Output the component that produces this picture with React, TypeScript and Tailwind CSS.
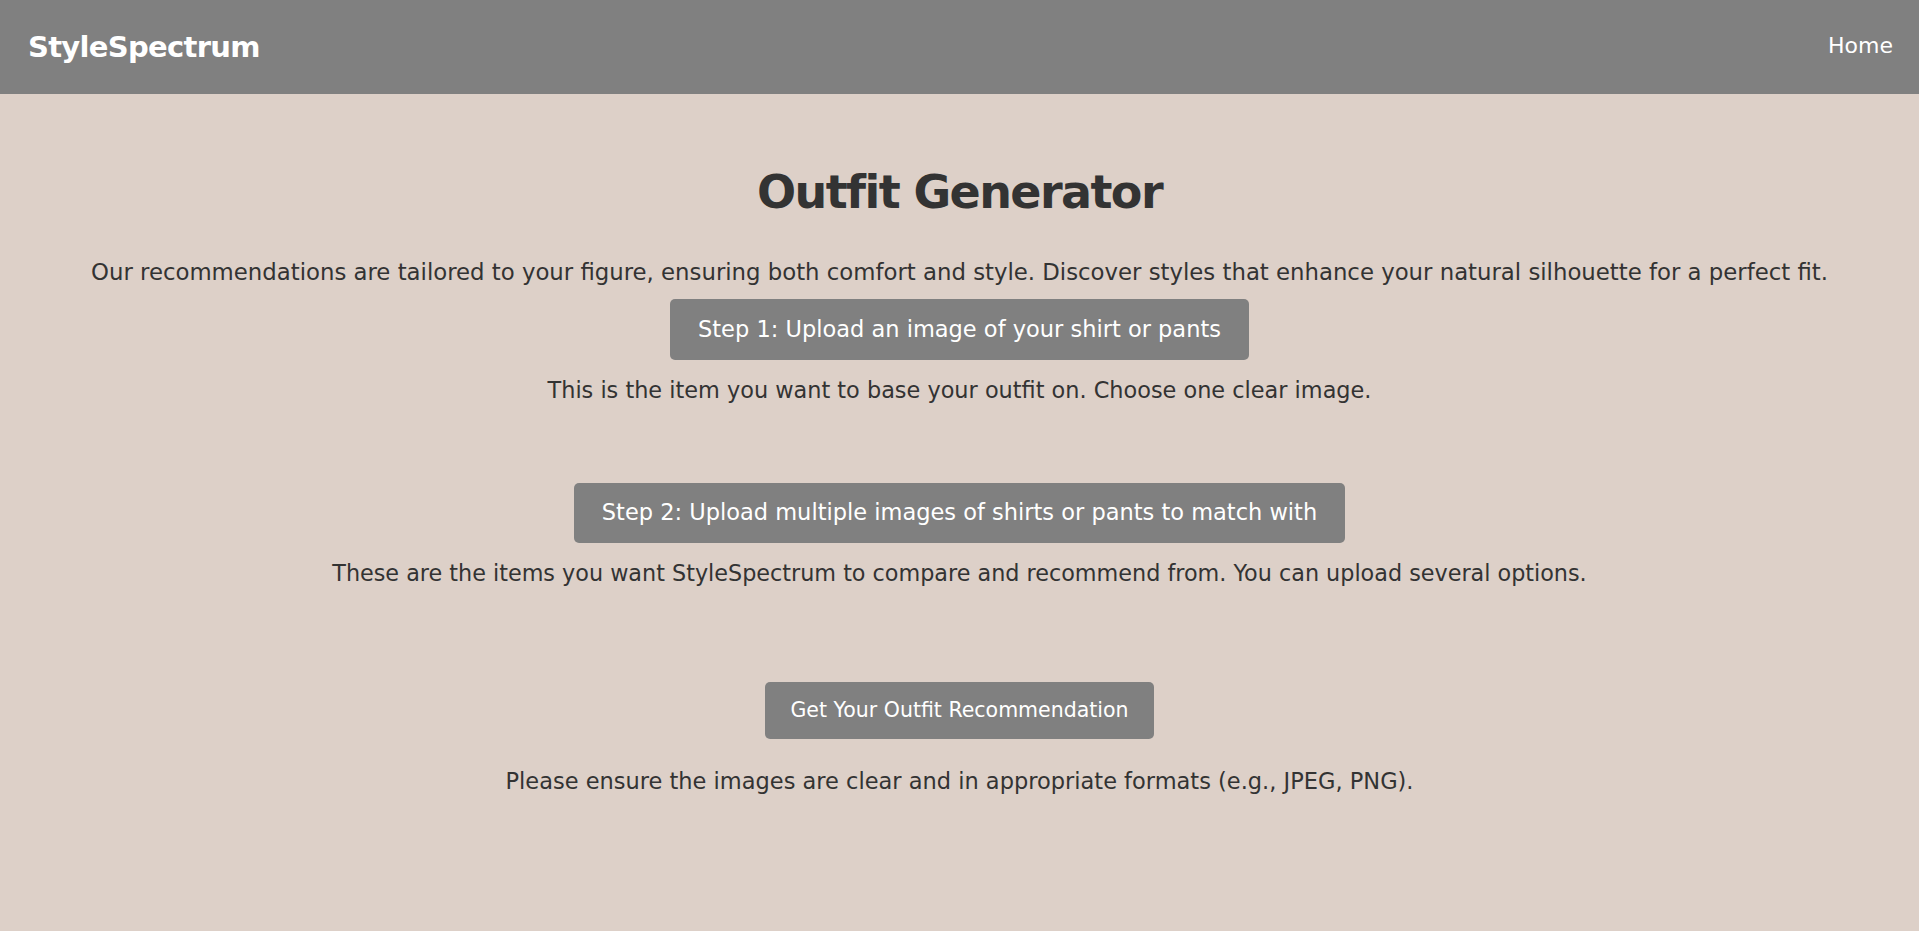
const App = () => {
  return (
    <div className="min-h-screen bg-[#ddd0c8] text-[#333333] font-['Comic_Sans_MS','DejaVu_Sans',sans-serif]">
      <header className="h-[94px] bg-[#808080] flex items-center justify-between pl-[28px] pr-[26px]">
        <a href="#" className="text-[29px] tracking-[-0.7px] font-bold text-white leading-none">
          StyleSpectrum
        </a>
        <nav>
          <a href="#" className="text-[22px] text-white leading-none">
            Home
          </a>
        </nav>
      </header>

      <main className="flex flex-col items-center text-center pb-16">
        <h1 className="mt-[69px] text-[46px] tracking-[-1.6px] leading-[58px] font-bold">Outfit Generator</h1>
        <p className="mt-[35px] text-[22.8px] leading-[32px]">
          Our recommendations are tailored to your figure, ensuring both comfort and style. Discover styles that enhance your natural silhouette for a perfect fit.
        </p>

        <button className="mt-[11px] h-[61px] px-[28px] rounded-[5px] bg-[#808080] text-white text-[22.5px]">
          Step 1: Upload an image of your shirt or pants
        </button>
        <p className="mt-[14px] text-[22.4px] leading-[32px]">
          This is the item you want to base your outfit on. Choose one clear image.
        </p>

        <button className="mt-[77px] h-[60px] px-[28px] rounded-[5px] bg-[#808080] text-white text-[22.5px]">
          Step 2: Upload multiple images of shirts or pants to match with
        </button>
        <p className="mt-[14px] text-[22.3px] leading-[32px]">
          These are the items you want StyleSpectrum to compare and recommend from. You can upload several options.
        </p>

        <button className="mt-[93px] h-[57px] px-[25px] rounded-[5px] bg-[#808080] text-white text-[20.5px]">
          Get Your Outfit Recommendation
        </button>
        <p className="mt-[26px] text-[22.5px] leading-[32px]">
          Please ensure the images are clear and in appropriate formats (e.g., JPEG, PNG).
        </p>
      </main>
    </div>
  );
};

export default App;
